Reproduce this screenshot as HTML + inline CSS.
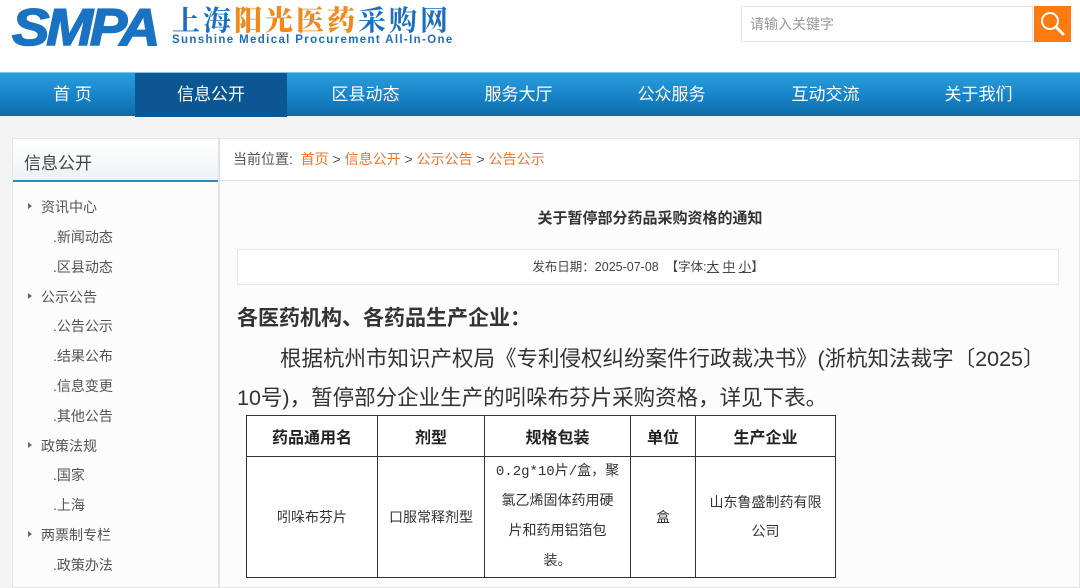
<!DOCTYPE html>
<html><head><meta charset="utf-8"><style>
*{margin:0;padding:0;box-sizing:border-box}
body{width:1080px;height:582px;overflow:hidden;background:#f3f3f3;font-family:"Liberation Sans","Noto Sans CJK SC",sans-serif;position:relative}
.hdr{position:absolute;left:0;top:0;width:1080px;height:72px;background:#fff}
.logo{position:absolute;left:12px;top:-2px;font:italic 900 52px "Liberation Sans",sans-serif;font-weight:bold;color:#1a73c2;letter-spacing:-3px;transform:scaleX(1.08);transform-origin:left;-webkit-text-stroke:1.5px #1a73c2}
.cn{position:absolute;left:172px;top:4px;font:bold 28px/30px "Noto Serif CJK SC",serif;letter-spacing:3px;color:#1a6fc0;white-space:nowrap}
.cn b{color:#f08a1c}
.en{position:absolute;left:172px;top:34px;font:bold 11.5px "Liberation Sans",sans-serif;color:#1a6fc0;letter-spacing:1.35px;white-space:nowrap}
.search{position:absolute;left:741px;top:6px;width:292px;height:36px;border:1px solid #e4e4e4;background:#fff;color:#999;font-size:14px;line-height:34px;padding-left:8px}
.sbtn{position:absolute;left:1034px;top:6px;width:37px;height:36px;background:#ff7a0f}
.nav{position:absolute;left:0;top:72px;width:1080px;height:44px;background:linear-gradient(#2a9fdc,#1580c4 60%,#0d6aa8);border-top:1px solid #7fc6ec}
.nav div{position:absolute;top:0;height:44px;line-height:43px;color:#fff;font-size:17px;text-align:center;width:153px}
.nav .act{background:#0a5793}
.side{position:absolute;left:12px;top:138px;width:207px;height:450px;background:#fcfcfc;border:1px solid #e6e6e6}
.side .t{height:43px;border-bottom:2px solid #2b8cc4;font-size:17px;color:#444;padding:10px 0 0 11px;background:linear-gradient(#fff,#eef2f5)}
.side p{position:absolute;font-size:14px;color:#555;white-space:nowrap}
.side p.m:before{content:"";position:absolute;left:-13px;top:6px;border-left:4px solid #666;border-top:3px solid transparent;border-bottom:3px solid transparent}
.main{position:absolute;left:219px;top:138px;width:861px;height:450px;background:#fcfcfc;border:1px solid #e6e6e6;border-left:1px solid #e0e0e0}
.bc{height:42px;border-bottom:1px solid #e3e3e3;font-size:14px;color:#555;line-height:40px;padding-left:13px;background:#fff}
.bc span{color:#f0762a}
.title{position:absolute;left:0;width:860px;top:68px;text-align:center;font-size:15px;font-weight:bold;color:#333}
.date{position:absolute;left:17px;top:110px;width:822px;height:36px;border:1px solid #e6e6e6;background:#fff;text-align:center;font-size:12.5px;line-height:34px;color:#444}
.date u{text-decoration:underline}
.h{position:absolute;left:17px;top:163px;font-size:21px;font-weight:bold;color:#333;white-space:nowrap}
.pp{position:absolute;left:17px;font-size:21.5px;color:#333;white-space:nowrap}
table{position:absolute;left:26px;top:276px;border-collapse:collapse;background:#fff}
td{border:1px solid #333;text-align:center;font-size:14px;color:#333}
th{border:1px solid #333;font-size:16px;font-weight:bold;color:#222;height:41px}
td.sp{font-family:"Liberation Mono","Noto Sans CJK SC",monospace;font-size:14px;line-height:30px;padding:0;white-space:nowrap}
</style></head><body>
<div class="hdr">
<div class="logo">SMPA</div>
<div class="cn">上海<b>阳光医药</b>采购网</div>
<div class="en">Sunshine Medical Procurement All-In-One</div>
<div class="search">请输入关键字</div>
<div class="sbtn"><svg width="37" height="36" viewBox="0 0 37 36"><circle cx="16" cy="15" r="8" fill="none" stroke="#fff" stroke-width="2"/><path d="M22 21l7 7" stroke="#fff" stroke-width="3" stroke-linecap="round"/></svg></div>
</div>
<div class="nav">
<div style="left:-4px">首 页</div>
<div class="act" style="left:135px;width:152px">信息公开</div>
<div style="left:289px">区县动态</div>
<div style="left:442px">服务大厅</div>
<div style="left:595px">公众服务</div>
<div style="left:749px">互动交流</div>
<div style="left:902px">关于我们</div>
</div>
<div class="side">
<div class="t">信息公开</div>
<p class="m" style="left:28px;top:58px">资讯中心</p>
<p style="left:40px;top:88px">.新闻动态</p>
<p style="left:40px;top:118px">.区县动态</p>
<p class="m" style="left:28px;top:148px">公示公告</p>
<p style="left:40px;top:177px">.公告公示</p>
<p style="left:40px;top:207px">.结果公布</p>
<p style="left:40px;top:237px">.信息变更</p>
<p style="left:40px;top:267px">.其他公告</p>
<p class="m" style="left:28px;top:297px">政策法规</p>
<p style="left:40px;top:326px">.国家</p>
<p style="left:40px;top:356px">.上海</p>
<p class="m" style="left:28px;top:386px">两票制专栏</p>
<p style="left:40px;top:416px">.政策办法</p>
</div>
<div class="main">
<div class="bc">当前位置: &nbsp;<span>首页</span> &gt; <span>信息公开</span> &gt; <span>公示公告</span> &gt; <span>公告公示</span></div>
<div class="title">关于暂停部分药品采购资格的通知</div>
<div class="date">发布日期：2025-07-08 &nbsp;【字体:<u>大</u> <u>中</u> <u>小</u>】</div>
<div class="h">各医药机构、各药品生产企业：</div>
<div class="pp" style="top:203px">&emsp;&emsp;根据杭州市知识产权局《专利侵权纠纷案件行政裁决书》(浙杭知法裁字〔2025〕</div>
<div class="pp" style="top:242px">10号)，暂停部分企业生产的吲哚布芬片采购资格，详见下表。</div>
<table>
<tr><th style="width:131px">药品通用名</th><th style="width:107px">剂型</th><th style="width:146px">规格包装</th><th style="width:65px">单位</th><th style="width:140px">生产企业</th></tr>
<tr style="height:120px"><td>吲哚布芬片</td><td>口服常释剂型</td><td class="sp">0.2g*10片/盒，聚<br>氯乙烯固体药用硬<br>片和药用铝箔包<br>装。</td><td>盒</td><td style="line-height:29px;padding:0 8px">山东鲁盛制药有限公司</td></tr>
</table>
</div>
</body></html>
